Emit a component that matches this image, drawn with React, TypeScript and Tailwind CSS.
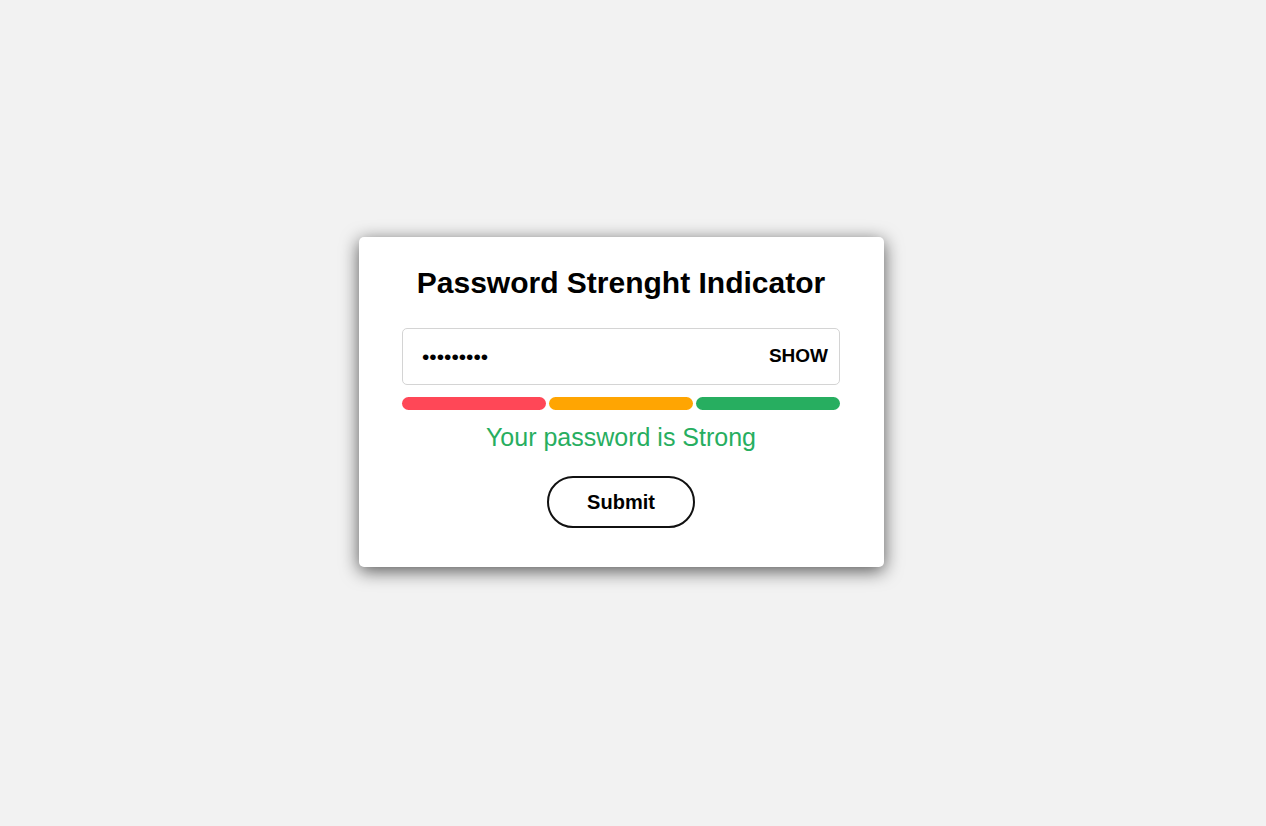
import { useState } from 'react';

export default function App() {
  const [show, setShow] = useState(false);
  const [password, setPassword] = useState('Abc12345!');

  return (
    <div
      className="min-h-screen bg-[#f2f2f2] flex items-center justify-center pr-[23px] pb-[22px]"
      style={{ fontFamily: '"Liberation Sans", Arial, sans-serif' }}
    >
      <div className="w-[525px] bg-white rounded-[5px] shadow-[0_4px_18px_rgba(0,0,0,0.65)] pl-[43px] pr-[44px] pt-[28px] pb-[39px] flex flex-col items-center">
        <h1 className="text-[30px] font-bold text-black leading-[36px]">Password Strenght Indicator</h1>

        {/* input */}
        <div className="mt-[27px] w-full h-[57px] border border-[#d4d4d4] rounded-[5px] flex items-center pl-[19px] pr-[11px]">
          <input
            type={show ? 'text' : 'password'}
            value={password}
            onChange={(e) => setPassword(e.target.value)}
            className="flex-1 min-w-0 outline-none text-[21px] text-black bg-transparent"
            style={{ fontFamily: '"Liberation Sans", Arial, sans-serif' }}
          />
          <button
            onClick={() => setShow(!show)}
            className="text-[19px] font-bold text-black"
          >
            {show ? 'HIDE' : 'SHOW'}
          </button>
        </div>

        {/* strength bars */}
        <div className="mt-[12px] w-full flex gap-[3px]">
          <div className="flex-1 h-[13px] rounded-full bg-[#ff4757]" />
          <div className="flex-1 h-[13px] rounded-full bg-[#ffa502]" />
          <div className="flex-1 h-[13px] rounded-full bg-[#27ae60]" />
        </div>

        <p className="mt-[12px] text-[25px] leading-[31px] text-[#27ae60]">Your password is Strong</p>

        <button className="mt-[23px] w-[148px] h-[52px] rounded-full border-2 border-[#111] text-[20px] font-bold text-black">
          Submit
        </button>
      </div>
    </div>
  );
}
